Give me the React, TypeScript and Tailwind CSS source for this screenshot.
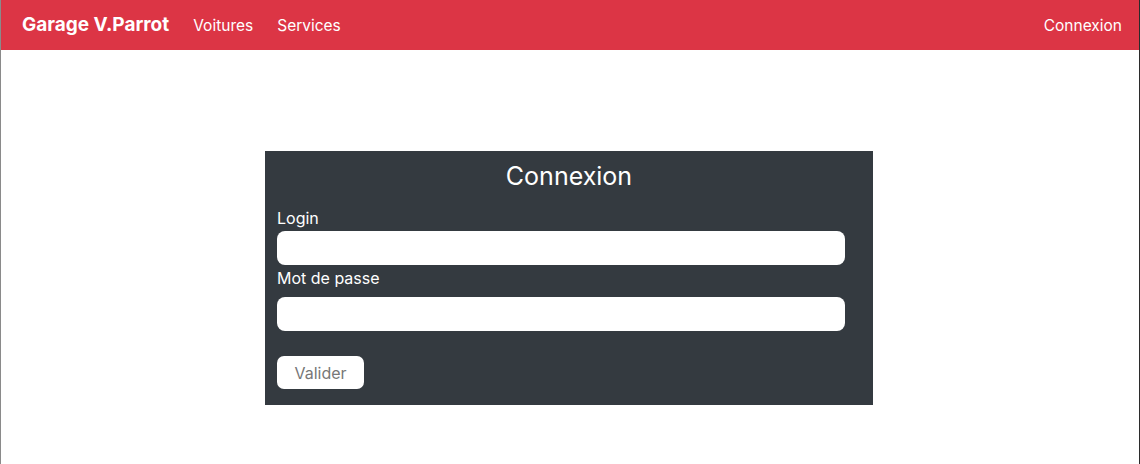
export default function App() {
  return (
    <div
      className="h-[464px] bg-white border-l border-l-[#8a8a8a] border-r border-r-[#2b2b2b] flex flex-col"
      style={{ fontFamily: "Inter, 'Liberation Sans', sans-serif" }}
    >
      <nav className="h-[50px] bg-[#dc3545] flex items-center pl-[21px] pr-[17px] pt-[1px] text-white">
        <span className="text-[19px] font-bold mr-[24px]">Garage V.Parrot</span>
        <div className="flex gap-[24px] text-[15.5px]">
          <a href="#voitures">Voitures</a>
          <a href="#services">Services</a>
        </div>
        <a href="#connexion" className="ml-auto text-[15.5px]">
          Connexion
        </a>
      </nav>

      <div className="flex justify-center pt-[101px]">
        <form className="w-[608px] h-[254px] mr-[2px] bg-[#343a40] pl-[12px] pr-[28px] pt-[7px] text-white">
          <h2 className="text-center text-[25px] leading-[36px] mb-[12px] ml-[8px] -mr-[8px]">
            Connexion
          </h2>
          <label className="block text-[16px] leading-[24px] mb-[1px]">Login</label>
          <input className="block w-full h-[34px] bg-white rounded-[8px] outline-none" />
          <label className="block text-[16px] leading-[24px] mt-[1px] mb-[7px]">Mot de passe</label>
          <input
            type="password"
            className="block w-full h-[34px] bg-white rounded-[8px] outline-none"
          />
          <button
            type="button"
            className="mt-[25px] w-[87px] h-[33px] bg-white rounded-[7px] text-[#777777] text-[16px]"
          >
            Valider
          </button>
        </form>
      </div>
    </div>
  );
}
